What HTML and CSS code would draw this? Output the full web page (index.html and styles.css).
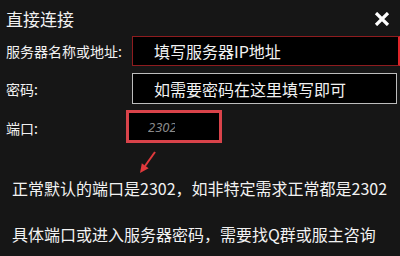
FILE: index.html
```html
<!DOCTYPE html>
<html lang="zh-CN">
<head>
<meta charset="utf-8">
<title>直接连接</title>
<link rel="stylesheet" href="styles.css">
</head>
<body>
<div class="dialog">
  <div class="header">
    <div class="title">直接连接</div>
    <svg class="close" width="16" height="14" viewBox="0 0 16 14"><path d="M2 1 L14 13 M14 1 L2 13" stroke="#ffffff" stroke-width="3.2" fill="none"/></svg>
  </div>
  <div class="row row-addr">
    <div class="label">服务器名称或地址:</div>
    <div class="field field-addr">填写服务器IP地址</div>
  </div>
  <div class="row row-pass">
    <div class="label">密码:</div>
    <div class="field field-pass">如需要密码在这里填写即可</div>
  </div>
  <div class="row row-port">
    <div class="label">端口:</div>
    <div class="port-box"><span class="port-text">2302</span></div>
  </div>
  <div class="arrow-wrap">
    <svg class="arrow" width="30" height="33" viewBox="0 0 30 33">
      <path d="M20 9 L10 23" stroke="#e0393c" stroke-width="2" fill="none"/>
      <polygon points="5,30 13.6,25.2 6.8,20.2" fill="#e0393c"/>
    </svg>
  </div>
  <p class="note note-1">正常默认的端口是2302，如非特定需求正常都是2302</p>
  <p class="note note-2">具体端口或进入服务器密码，需要找Q群或服主咨询</p>
</div>
</body>
</html>
```
FILE: styles.css
```css
html, body {
  margin: 0;
  padding: 0;
  background: #161616;
}
body {
  width: 400px;
  height: 256px;
  overflow: hidden;
  font-family: "Noto Sans CJK SC", "Noto Sans", sans-serif;
  color: #f2f2f2;
}
.dialog {
  width: 400px;
  height: 256px;
}
.header {
  height: 36px;
  display: flex;
  align-items: center;
  justify-content: space-between;
  padding: 1px 10px 0 6px;
  box-sizing: border-box;
}
.title {
  font-size: 17px;
  line-height: 20px;
}
.close {
  display: block;
}
.row {
  display: flex;
  align-items: center;
}
.label {
  width: 126px;
  flex: none;
  box-sizing: border-box;
  padding-left: 6px;
  font-size: 14px;
  line-height: 16px;
  white-space: nowrap;
}
.field {
  margin-left: 6px;
  box-sizing: border-box;
  background: #000;
  font-size: 16px;
  display: flex;
  align-items: center;
  padding-left: 21px;
  white-space: nowrap;
}
.row-addr {
  height: 30px;
}
.field-addr {
  width: 268px;
  height: 30px;
  border: 1px solid #8e1c1f;
  border-right: 2px solid #e0262b;
}
.row-pass {
  margin-top: 7px;
  height: 31px;
}
.field-pass {
  width: 265px;
  height: 31px;
  border: 1px solid #bdbdbd;
}
.row-port {
  margin-top: 6px;
  height: 33px;
}
.row-port .label {
  padding-top: 2px;
}
.port-box {
  width: 96px;
  height: 33px;
  box-sizing: border-box;
  border: 3px solid #d9434a;
  background: #000;
  display: flex;
  align-items: center;
  padding-left: 19px;
}
.port-text {
  display: block;
  width: 27px;
  overflow: hidden;
  white-space: nowrap;
  font-family: "Noto Sans", sans-serif;
  font-style: italic;
  font-size: 13px;
  line-height: 16px;
  color: #8a8a8a;
}
.arrow-wrap {
  height: 33px;
  padding-left: 135px;
}
.arrow {
  display: block;
}
.note {
  margin: 0;
  padding-left: 12px;
  font-size: 16px;
  line-height: 24px;
  white-space: nowrap;
}
.note-2 {
  margin-top: 22px;
}
```
